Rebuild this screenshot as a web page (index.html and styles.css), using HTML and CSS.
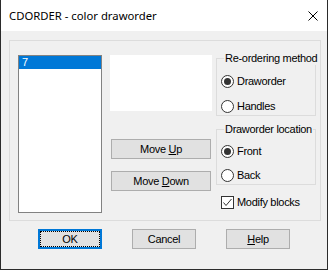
FILE: index.html
```html
<!DOCTYPE html>
<html lang="en">
<head>
    <meta charset="UTF-8">
    <title>CDORDER - color draworder</title>
    <link rel="stylesheet" href="styles.css">
</head>
<body>
    <div class="window">
        <div class="titlebar">
            <span class="title">CDORDER - color draworder</span>
            <svg class="close" width="10" height="10" viewBox="0 0 10 10">
                <path d="M0.5 0.5L9.5 9.5M9.5 0.5L0.5 9.5" stroke="#000" stroke-width="1" fill="none"/>
            </svg>
        </div>
        <div class="client">
            <div class="panel">
                <div class="listbox">
                    <div class="list-item selected">7</div>
                </div>
                <div class="middle">
                    <div class="preview"></div>
                    <button class="btn btn-move" type="button">Move <u>U</u>p</button>
                    <button class="btn btn-move btn-down" type="button">Move <u>D</u>own</button>
                </div>
                <div class="options">
                    <div class="group group-method">
                        <span class="group-label">Re-ordering method</span>
                        <label class="option"><span class="radio checked"></span>Draworder</label>
                        <label class="option"><span class="radio"></span>Handles</label>
                    </div>
                    <div class="group group-location">
                        <span class="group-label">Draworder location</span>
                        <label class="option"><span class="radio checked"></span>Front</label>
                        <label class="option"><span class="radio"></span>Back</label>
                    </div>
                    <label class="option check-row">
                        <span class="checkbox">
                            <svg width="11" height="11" viewBox="0 0 11 11">
                                <path d="M1.5 5.5L4 8.5L9.5 2" stroke="#333" stroke-width="1" fill="none"/>
                            </svg>
                        </span>Modify blocks
                    </label>
                </div>
            </div>
            <div class="actions">
                <button class="btn btn-default" type="button">OK</button>
                <button class="btn" type="button">Cancel</button>
                <button class="btn" type="button"><u>H</u>elp</button>
            </div>
        </div>
    </div>
</body>
</html>
```

FILE: styles.css
```css
:root {
    --face: #f0f0f0; --btn-face: #e1e1e1; --btn-border: #adadad;
    --etch: #dcdcdc; --ink: #000; --mark: #333; --accent: #0078d7;
    --ui-font: "Liberation Sans", Arial, sans-serif;
}
* { margin: 0; padding: 0; box-sizing: border-box; }
body { font-family: var(--ui-font); font-size: 11px; letter-spacing: -0.3px; color: var(--ink); background: #fff; }
.window { width: 328px; height: 270px; border: 1px solid #2b2b2b; border-top: none; display: flex; flex-direction: column; }
.titlebar { height: 31px; background: #fff; display: flex; align-items: center; justify-content: space-between; padding: 0 9px 0 8px; }
.title { font-family: "Noto Sans", sans-serif; font-size: 11.3px; letter-spacing: 0; }
.close { display: block; }
.client { flex-grow: 1; background: var(--face); padding: 9px 6px 0 8px; }
.panel { width: 312px; height: 181px; border: 1px solid var(--etch); display: flex; padding: 14px 0 0 8px; }
.listbox { width: 84px; height: 158px; border: 1px solid #828282; background: #fff; }
.list-item { height: 13px; line-height: 13px; padding-left: 3px; }
.list-item.selected { background: var(--accent); color: #fff; }
.middle { margin-left: 8px; width: 102px; display: flex; flex-direction: column; }
.preview { height: 56px; background: #fff; }
.btn { height: 20px; width: 64px; background: var(--btn-face); border: 1px solid var(--btn-border); font-family: var(--ui-font); font-size: 11px; letter-spacing: -0.3px; color: var(--ink); }
.btn u { text-decoration-thickness: 1px; text-underline-offset: 1px; }
.btn-move { width: 100px; margin: 28px 0 0 1px; }
.btn-down { margin-top: 12px; }
.options { margin-left: 4px; width: 100px; display: flex; flex-direction: column; }
.group { position: relative; border: 1px solid var(--etch); display: flex; flex-direction: column; padding: 16px 0 0 4px; }
.group-method { margin-top: 3px; height: 58px; gap: 12px; }
.group-location { margin-top: 13px; height: 56px; padding-top: 15px; gap: 11px; }
.group-label { position: absolute; top: -7px; left: 7px; padding: 0 1px; line-height: 13px; background: var(--face); white-space: nowrap; }
.option { display: flex; align-items: center; gap: 3px; height: 13px; line-height: 13px; white-space: nowrap; }
.radio { width: 13px; height: 13px; border: 1px solid var(--mark); border-radius: 50%; background: #fff; display: flex; align-items: center; justify-content: center; flex-shrink: 0; }
.radio.checked::after { content: ''; width: 7px; height: 7px; border-radius: 50%; background: var(--mark); }
.check-row { margin: 11px 0 0 5px; }
.checkbox { width: 13px; height: 13px; border: 1px solid var(--mark); background: #fff; display: flex; flex-shrink: 0; }
.checkbox svg { display: block; }
.actions { display: flex; gap: 30px; margin-top: 8px; padding-left: 29px; }
.btn-default { border: 2px solid var(--accent); outline: 1px dotted #000; outline-offset: -3px; }
```
